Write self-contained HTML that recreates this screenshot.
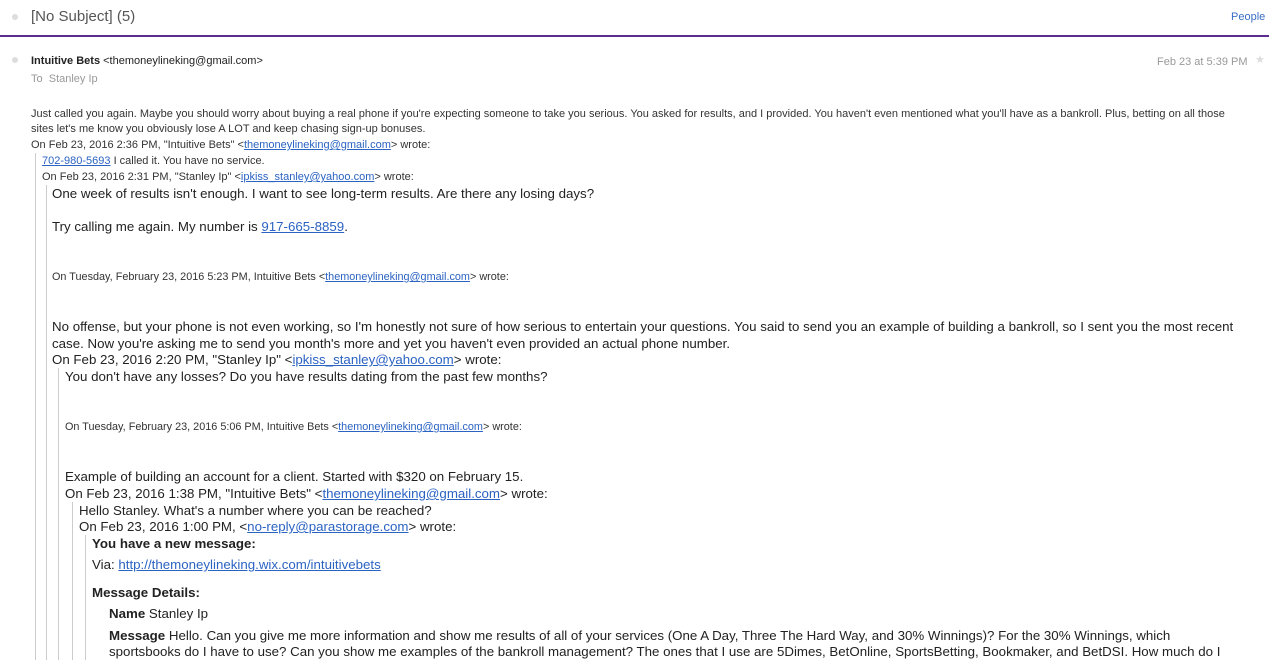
<!DOCTYPE html>
<html><head><meta charset="utf-8"><style>
body{margin:0;width:1269px;height:660px;overflow:hidden;background:#fff;position:relative;font-family:"Liberation Sans",Arial,sans-serif}
.t{position:absolute;white-space:nowrap;line-height:16px}
.s{font-size:11px;color:#333}
.b{font-size:13.3px;color:#222;line-height:17px}
.a{font-size:10.85px;color:#333}
a{color:#2b63c2;text-decoration:underline}
.v{position:absolute;width:1px;background:#ccc;bottom:0}
.dot{position:absolute;width:6px;height:6px;border-radius:3px;background:#ddd}
</style></head><body>
<div class="dot" style="left:12px;top:14px"></div>
<div class="t" style="left:31px;top:7px;font-size:15px;color:#555;line-height:20px">[No Subject] (5)</div>
<div class="t" style="left:1231px;top:9px;font-size:11px;color:#3a6fc4">People</div>
<div style="position:absolute;left:0;top:35px;width:1269px;height:2px;background:#5b2d8e"></div>
<div class="dot" style="left:12px;top:57px"></div>
<div class="t s" style="left:31px;top:53px;color:#222"><b>Intuitive Bets</b> &lt;themoneylineking@gmail.com&gt;</div>
<div class="t s" style="left:31px;top:71px;color:#999">To&nbsp; Stanley Ip</div>
<div class="t s" style="left:1157px;top:54px;color:#999">Feb 23 at 5:39 PM</div>
<div class="t s" style="left:1255px;top:52px;color:#ddd">★</div>

<div class="v" style="left:35px;top:153px"></div>
<div class="v" style="left:46px;top:185px"></div>
<div class="v" style="left:58px;top:368px"></div>
<div class="v" style="left:72px;top:502px"></div>
<div class="v" style="left:85px;top:535px"></div>

<div class="t s" style="left:31px;top:106px">Just called you again. Maybe you should worry about buying a real phone if you're expecting someone to take you serious. You asked for results, and I provided. You haven't even mentioned what you'll have as a bankroll. Plus, betting on all those</div>
<div class="t s" style="left:31px;top:121px">sites let's me know you obviously lose A LOT and keep chasing sign-up bonuses.</div>
<div class="t s" style="left:31px;top:137px">On Feb 23, 2016 2:36 PM, "Intuitive Bets" &lt;<a>themoneylineking@gmail.com</a>&gt; wrote:</div>
<div class="t s" style="left:42px;top:153px"><a>702-980-5693</a> I called it. You have no service.</div>
<div class="t s" style="left:42px;top:169px">On Feb 23, 2016 2:31 PM, "Stanley Ip" &lt;<a>ipkiss_stanley@yahoo.com</a>&gt; wrote:</div>

<div class="t b" style="left:52px;top:185px">One week of results isn't enough. I want to see long-term results. Are there any losing days?</div>
<div class="t b" style="left:52px;top:218px">Try calling me again. My number is <a>917-665-8859</a>.</div>
<div class="t a" style="left:52px;top:269px">On Tuesday, February 23, 2016 5:23 PM, Intuitive Bets &lt;<a>themoneylineking@gmail.com</a>&gt; wrote:</div>
<div class="t b" style="left:52px;top:318px">No offense, but your phone is not even working, so I'm honestly not sure of how serious to entertain your questions. You said to send you an example of building a bankroll, so I sent you the most recent</div>
<div class="t b" style="left:52px;top:335px">case. Now you're asking me to send you month's more and yet you haven't even provided an actual phone number.</div>
<div class="t b" style="left:52px;top:351px">On Feb 23, 2016 2:20 PM, "Stanley Ip" &lt;<a>ipkiss_stanley@yahoo.com</a>&gt; wrote:</div>
<div class="t b" style="left:65px;top:368px">You don't have any losses? Do you have results dating from the past few months?</div>
<div class="t a" style="left:65px;top:419px">On Tuesday, February 23, 2016 5:06 PM, Intuitive Bets &lt;<a>themoneylineking@gmail.com</a>&gt; wrote:</div>
<div class="t b" style="left:65px;top:468px">Example of building an account for a client. Started with $320 on February 15.</div>
<div class="t b" style="left:65px;top:485px">On Feb 23, 2016 1:38 PM, "Intuitive Bets" &lt;<a>themoneylineking@gmail.com</a>&gt; wrote:</div>
<div class="t b" style="left:79px;top:502px">Hello Stanley. What's a number where you can be reached?</div>
<div class="t b" style="left:79px;top:518px">On Feb 23, 2016 1:00 PM, &lt;<a>no-reply@parastorage.com</a>&gt; wrote:</div>
<div class="t b" style="left:92px;top:535px;font-weight:bold">You have a new message:</div>
<div class="t b" style="left:92px;top:556px">Via: <a>http://themoneylineking.wix.com/intuitivebets</a></div>
<div class="t b" style="left:92px;top:584px;font-weight:bold">Message Details:</div>
<div class="t b" style="left:109px;top:605px"><b>Name</b> Stanley Ip</div>
<div class="t b" style="left:109px;top:627px"><b>Message</b> Hello. Can you give me more information and show me results of all of your services (One A Day, Three The Hard Way, and 30% Winnings)? For the 30% Winnings, which</div>
<div class="t b" style="left:109px;top:643px">sportsbooks do I have to use? Can you show me examples of the bankroll management? The ones that I use are 5Dimes, BetOnline, SportsBetting, Bookmaker, and BetDSI. How much do I</div>
</body></html>
